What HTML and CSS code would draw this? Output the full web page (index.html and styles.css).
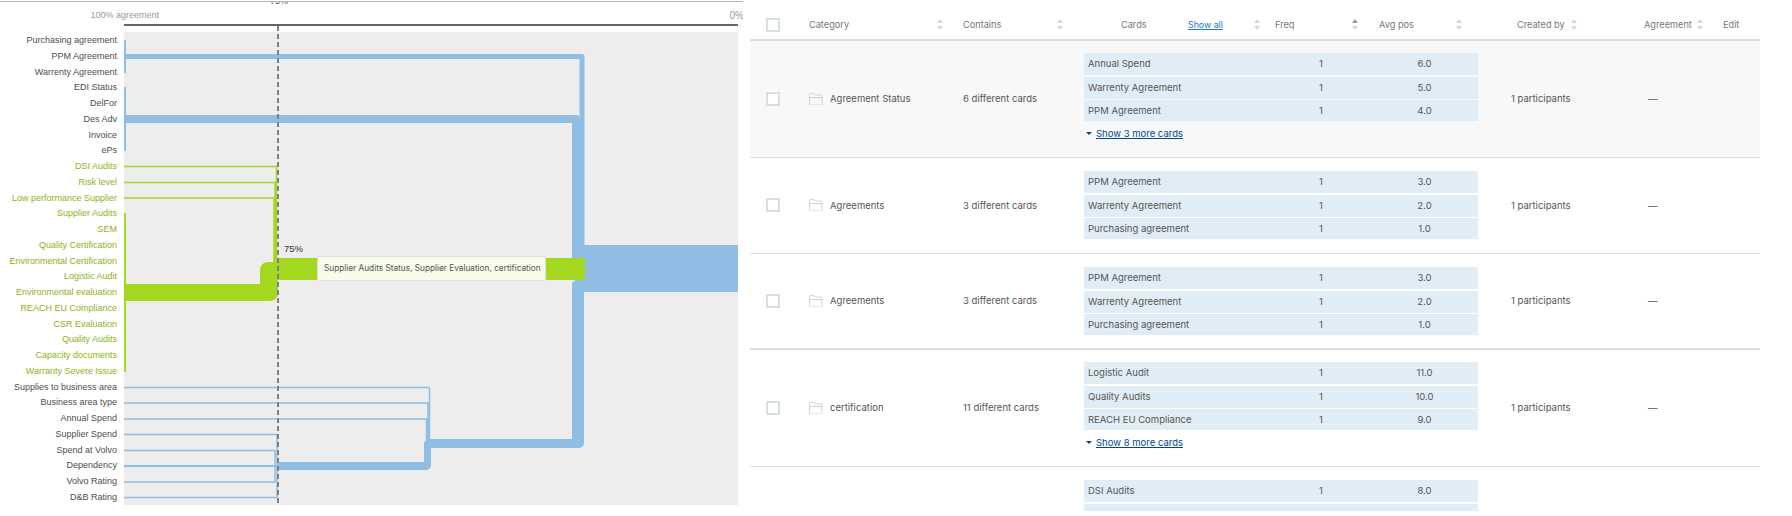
FILE: index.html
```html
<!DOCTYPE html>
<html lang="en">
<head>
  <meta charset="UTF-8">
  <title>Card sort results</title>
  <link rel="stylesheet" href="styles.css">
</head>
<body>
  <div class="page">
    <section class="chart">
      <div class="axis">
        <span class="axis-start">100% agreement</span>
        <span class="axis-tick">75%</span>
        <span class="axis-end">0%</span>
      </div>
      <div class="chart-body">
        <ul class="labels">
          <li>Purchasing agreement</li>
          <li>PPM Agreement</li>
          <li>Warrenty Agreement</li>
          <li>EDI Status</li>
          <li>DelFor</li>
          <li>Des Adv</li>
          <li>Invoice</li>
          <li>ePs</li>
          <li class="green">DSI Audits</li>
          <li class="green">Risk level</li>
          <li class="green">Low performance Supplier</li>
          <li class="green">Supplier Audits</li>
          <li class="green">SEM</li>
          <li class="green">Quality Certification</li>
          <li class="green">Environmental Certification</li>
          <li class="green">Logistic Audit</li>
          <li class="green">Environmental evaluation</li>
          <li class="green">REACH EU Compliance</li>
          <li class="green">CSR Evaluation</li>
          <li class="green">Quality Audits</li>
          <li class="green">Capacity documents</li>
          <li class="green">Warranty Severe Issue</li>
          <li>Supplies to business area</li>
          <li>Business area type</li>
          <li>Annual Spend</li>
          <li>Supplier Spend</li>
          <li>Spend at Volvo</li>
          <li>Dependency</li>
          <li>Volvo Rating</li>
          <li>D&amp;B Rating</li>
        </ul>
        <div class="plot">
          <svg class="plot-svg" viewBox="124 32 614 473" width="614" height="473">
            <!-- blue groups -->
            <g fill="none" stroke="#8fbde4" stroke-linejoin="round">
              <path d="M125 40V73M125 87V151" stroke-width="2"/>
              <path d="M124 56.500H582V250" stroke-width="5"/>
              <path d="M124 119H576V250" stroke-width="8"/>
              <path d="M124 387.500H429.500V440M124 403H428V440M124 419H426.500V440" stroke-width="1.500"/>
              <path d="M124 434.500H277V497.500H124M124 450.500H275V482H124" stroke-width="1.500"/>
              <path d="M124 466H278" stroke-width="2"/>
              <path d="M572 285a5 5 0 0 1 5-5h7v-35h154v47H584v151a5 5 0 0 1-5 5H431v17a5 5 0 0 1-5 5H278v-8h146v-18a5 5 0 0 1 5-5h143z" fill="#8fbde4" stroke="none"/>
              <path d="M572 258V245H584V258z" fill="#8fbde4" stroke="none"/>
            </g>
            <!-- green group -->
            <g fill="none" stroke="#a4d71f">
              <path d="M125 213V372" stroke-width="2"/>
              <path d="M124 166.500H276.500V262M124 182.500H275V262M124 198H274V262" stroke-width="1.500"/>
            </g>
            <path class="flow-green" d="M124 284H260V270a8 8 0 0 1 8-8H278V293a8 8 0 0 1-8 8H124z"/>
            <rect class="flow-green" x="278" y="258" width="307" height="22"/>
            <line class="cut-line" x1="278" y1="26" x2="278" y2="505"/>
            <text class="cut-label" x="284" y="252">75%</text>
          </svg>
          <div class="tooltip">Supplier Audits Status, Supplier Evaluation, certification</div>
        </div>
      </div>
    </section>

    <section class="results">
      <div class="row head">
        <div class="cell-check"><span class="checkbox"></span></div>
        <div class="th th-category">Category <i class="sort"></i></div>
        <div class="th th-contains">Contains <i class="sort"></i></div>
        <div class="cards-head">
          <div class="th th-cards"><span class="th-cards-name">Cards</span><a class="show-all">Show all</a><i class="sort"></i></div>
          <div class="th th-freq">Freq <i class="sort sort-up"></i></div>
          <div class="th th-avg">Avg pos <i class="sort"></i></div>
        </div>
        <div class="th th-created">Created by <i class="sort"></i></div>
        <div class="th th-agree">Agreement <i class="sort"></i></div>
        <div class="th th-edit">Edit</div>
      </div>

      <div class="row item item-first has-more">
        <div class="cell-check"><span class="checkbox"></span></div>
        <div class="category">
          <svg class="folder" viewBox="0 0 14 12" width="14" height="12"><path d="M.5 2V1.300q0-.8.8-.8h3.400l1 1.500h6.500q.8 0 .8.8v8.400q0 .8-.8.8H1.300q-.8 0-.8-.8zM.5 4.500h13"/></svg>
          Agreement Status
        </div>
        <div class="contains">6 different cards</div>
        <div class="cards">
          <div class="card"><span>Annual Spend</span><span>1</span><span>6.0</span></div>
          <div class="card"><span>Warrenty Agreement</span><span>1</span><span>5.0</span></div>
          <div class="card"><span>PPM Agreement</span><span>1</span><span>4.0</span></div>
          <a class="more"><i class="caret"></i><u>Show 3 more cards</u></a>
        </div>
        <div class="created">1 participants</div>
        <div class="agree">—</div>
      </div>

      <div class="row item">
        <div class="cell-check"><span class="checkbox"></span></div>
        <div class="category">
          <svg class="folder" viewBox="0 0 14 12" width="14" height="12"><path d="M.5 2V1.300q0-.8.8-.8h3.400l1 1.500h6.500q.8 0 .8.8v8.400q0 .8-.8.8H1.300q-.8 0-.8-.8zM.5 4.500h13"/></svg>
          Agreements
        </div>
        <div class="contains">3 different cards</div>
        <div class="cards">
          <div class="card"><span>PPM Agreement</span><span>1</span><span>3.0</span></div>
          <div class="card"><span>Warrenty Agreement</span><span>1</span><span>2.0</span></div>
          <div class="card"><span>Purchasing agreement</span><span>1</span><span>1.0</span></div>
        </div>
        <div class="created">1 participants</div>
        <div class="agree">—</div>
      </div>

      <div class="row item item-thick">
        <div class="cell-check"><span class="checkbox"></span></div>
        <div class="category">
          <svg class="folder" viewBox="0 0 14 12" width="14" height="12"><path d="M.5 2V1.300q0-.8.8-.8h3.400l1 1.500h6.500q.8 0 .8.8v8.400q0 .8-.8.8H1.300q-.8 0-.8-.8zM.5 4.500h13"/></svg>
          Agreements
        </div>
        <div class="contains">3 different cards</div>
        <div class="cards">
          <div class="card"><span>PPM Agreement</span><span>1</span><span>3.0</span></div>
          <div class="card"><span>Warrenty Agreement</span><span>1</span><span>2.0</span></div>
          <div class="card"><span>Purchasing agreement</span><span>1</span><span>1.0</span></div>
        </div>
        <div class="created">1 participants</div>
        <div class="agree">—</div>
      </div>

      <div class="row item has-more">
        <div class="cell-check"><span class="checkbox"></span></div>
        <div class="category">
          <svg class="folder" viewBox="0 0 14 12" width="14" height="12"><path d="M.5 2V1.300q0-.8.8-.8h3.400l1 1.500h6.500q.8 0 .8.8v8.400q0 .8-.8.8H1.300q-.8 0-.8-.8zM.5 4.500h13"/></svg>
          certification
        </div>
        <div class="contains">11 different cards</div>
        <div class="cards">
          <div class="card"><span>Logistic Audit</span><span>1</span><span>11.0</span></div>
          <div class="card"><span>Quality Audits</span><span>1</span><span>10.0</span></div>
          <div class="card"><span>REACH EU Compliance</span><span>1</span><span>9.0</span></div>
          <a class="more"><i class="caret"></i><u>Show 8 more cards</u></a>
        </div>
        <div class="created">1 participants</div>
        <div class="agree">—</div>
      </div>

      <div class="row item">
        <div class="cell-check"></div>
        <div class="category"></div>
        <div class="contains"></div>
        <div class="cards">
          <div class="card"><span>DSI Audits</span><span>1</span><span>8.0</span></div>
          <div class="card"><span>DelFor</span><span>1</span><span>7.0</span></div>
        </div>
      </div>
    </section>
  </div>
</body>
</html>
```

FILE: styles.css
```css
:root {
  --blue: #8fbde4;
  --green: #a4d71f;
  --line: #d6e0e0;
  --card: #e1edf6;
  --text: #555;
}

html, body {
  margin: 0;
  height: 100%;
  background: #fff;
  overflow: hidden;
}

.page {
  display: flex;
  height: 516px;
}

/* left chart */
.chart {
  width: 743px;
  margin-right: 7px;
  flex: none;
  border-top: 1px solid #b5b5b5;
  margin-top: 1px;
  font-family: "Liberation Sans", Arial, sans-serif;
  font-size: 9px;
  overflow: hidden;
}

.axis {
  position: relative;
  height: 22px;
  margin-left: 124px;
  margin-right: 5px;
  border-bottom: 2px solid #666;
  color: #999;
}

.axis-start {
  position: absolute;
  right: 100%;
  top: 8px;
  margin-right: -35px;
  white-space: nowrap;
}

.axis-tick {
  position: absolute;
  left: 146px;
  top: -6px;
  color: #555;
}

.axis-end {
  position: absolute;
  right: -6px;
  top: 8px;
  font-size: 10px;
}

.chart-body {
  display: flex;
  margin-top: 6px;
}

.labels {
  list-style: none;
  margin: 0 7px 0 0;
  padding: 1px 0 0;
  width: 117px;
  flex: none;
  text-align: right;
  color: #4d4d4d;
}

.labels li {
  height: 15.76px;
  line-height: 15.76px;
  white-space: nowrap;
}

.labels .green {
  color: #8db21a;
}

.plot {
  position: relative;
  width: 614px;
  height: 473px;
  background: #ededed;
}

.plot-svg {
  display: block;
  overflow: visible;
}

.flow-green {
  fill: var(--green);
}

.cut-line {
  stroke: #808080;
  stroke-width: 2;
  stroke-dasharray: 5 3;
}

.cut-label {
  font-size: 9.500px;
  fill: #333;
}

.tooltip {
  position: absolute;
  left: 193px;
  top: 224px;
  width: 229px;
  height: 25px;
  box-sizing: border-box;
  background: #f7fbea;
  border: 1px solid #e2e2e2;
  border-radius: 2px;
  line-height: 23px;
  padding-left: 6px;
  font-family: Inter, sans-serif;
  font-size: 8.250px;
  color: #555;
  white-space: nowrap;
}

/* right table */
.results {
  width: 1010px;
  height: 511px;
  flex: none;
  overflow: hidden;
  font-family: Inter, sans-serif;
  font-size: 9.500px;
  color: var(--text);
}

.row {
  display: grid;
  grid-template-columns: 59px 154px 121px 394px 162px 83px 37px;
  align-items: center;
}

.head {
  height: 39px;
  border-bottom: 2px solid var(--line);
  color: #777;
  font-size: 9.200px;
}

.head .cell-check {
  padding: 10px 0 0 16px;
}

.cell-check {
  padding: 0 0 1px 16px;
}

.checkbox {
  display: block;
  width: 14px;
  height: 14px;
  box-sizing: border-box;
  background: #fff;
  border: 2px solid var(--line);
}

.th {
  display: flex;
  align-items: center;
  justify-content: space-between;
  padding-top: 10px;
}

.sort {
  position: relative;
  display: block;
  width: 6px;
  height: 11px;
  flex: none;
}

.sort::before,
.sort::after {
  content: "";
  position: absolute;
  left: 0;
  border-left: 3px solid transparent;
  border-right: 3px solid transparent;
}

.sort::before {
  top: 0;
  border-bottom: 4px solid #d8d8d8;
}

.sort::after {
  bottom: 0;
  border-top: 4px solid #d8d8d8;
}

.sort-up::before {
  border-bottom-color: #999;
}

.th-category {
  padding-right: 20px;
}

.th-contains {
  padding-right: 21px;
}

.cards-head {
  display: grid;
  grid-template-columns: 187px 100px 107px;
}

.th-cards {
  padding-left: 37px;
  padding-right: 11px;
}

.th-cards-name {
  width: 67px;
}

.show-all {
  color: #1a7bd0;
  font-size: 8.800px;
  text-decoration: underline;
  margin-right: auto;
}

.th-freq {
  padding-left: 4px;
  padding-right: 13px;
}

.th-avg {
  padding-left: 8px;
  padding-right: 16px;
}

.th-created {
  padding-left: 39px;
  justify-content: flex-start;
  gap: 6px;
}

.th-agree {
  padding-left: 4px;
  justify-content: flex-start;
  gap: 5px;
}

.item {
  border-bottom: 1px solid var(--line);
}

.item-first {
  background: #f8f8f8;
}

.cards {
  padding: 13px 0 14px;
}

.item-thick {
  border-bottom-width: 2px;
}

.item-thick .cards {
  padding-bottom: 13px;
}

.has-more .cards {
  padding: 12px 0 0;
}

.category {
  display: flex;
  align-items: center;
  gap: 7px;
  padding-bottom: 1px;
}

.contains {
  padding-bottom: 1px;
}

.folder {
  flex: none;
  fill: none;
  stroke: #d2d2d2;
  stroke-width: 1;
}

.card {
  display: grid;
  grid-template-columns: 187px 100px 107px;
  height: 22px;
  line-height: 22px;
  margin-top: 1px;
  background: var(--card);
}

.card:first-child {
  margin-top: 0;
}

.card:nth-child(2) {
  margin-top: 2px;
}

.card:nth-child(3) {
  height: 21px;
}

.card span {
  text-align: center;
  white-space: nowrap;
}

.card span:first-child {
  text-align: left;
  padding-left: 4px;
}

.more {
  display: flex;
  align-items: center;
  height: 24px;
  padding: 0 0 12px 2px;
  color: #00478f;
}

.caret {
  width: 0;
  height: 0;
  margin-right: 4px;
  border-left: 3px solid transparent;
  border-right: 3px solid transparent;
  border-top: 3px solid #00478f;
}

.created {
  padding: 0 0 1px 33px;
}

.agree {
  padding: 0 0 1px 8px;
}
```
